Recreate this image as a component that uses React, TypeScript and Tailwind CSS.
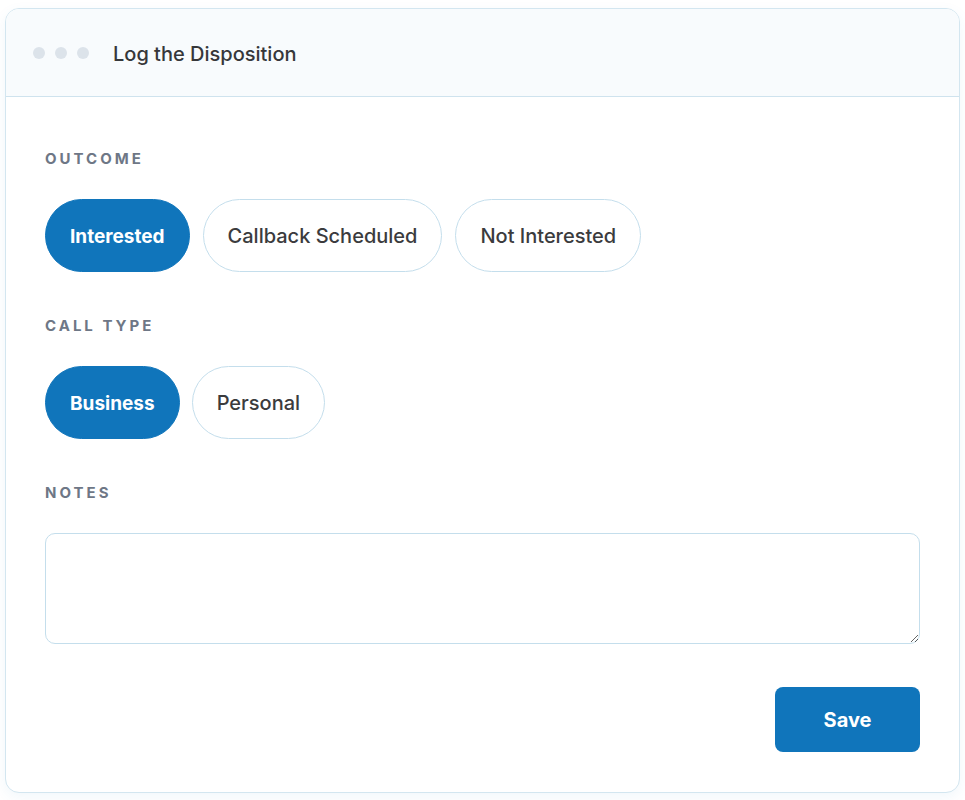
import { useState } from 'react'

const outcomes = ['Interested', 'Callback Scheduled', 'Not Interested']
const callTypes = ['Business', 'Personal']

function Pill({ label, active, onClick }: { label: string; active: boolean; onClick: () => void }) {
  return (
    <button
      type="button"
      onClick={onClick}
      className={
        active
          ? 'h-[73px] rounded-full border border-[#1075bb] bg-[#1075bb] px-[24px] pt-[3px] text-[19px] font-bold text-white'
          : 'h-[73px] rounded-full border border-[#c4deec] bg-white px-[24px] text-[20px] font-medium text-[#3b3b3d]'
      }
    >
      {label}
    </button>
  )
}

function Label({ children }: { children: string }) {
  return (
    <p className="text-[15px] leading-5 font-bold tracking-[0.2em] text-[#6e7786]">{children}</p>
  )
}

export default function App() {
  const [outcome, setOutcome] = useState('Interested')
  const [callType, setCallType] = useState('Business')
  const [notes, setNotes] = useState('')

  return (
    <div className="min-h-screen bg-white pt-[8px] pl-[5px] font-['Inter',sans-serif]">
      <div className="flex h-[785px] w-[955px] flex-col overflow-hidden rounded-[14px] border border-[#d3e6f0] bg-white shadow-[0_4px_14px_rgba(16,117,187,0.06)]">
        {/* Header */}
        <div className="flex h-[88px] shrink-0 items-center border-b border-[#cfe3ee] bg-[#f8fbfd] pl-[27px]">
          <div className="flex gap-[10px]">
            <span className="h-[12px] w-[12px] rounded-full bg-[#dce3ea]" />
            <span className="h-[12px] w-[12px] rounded-full bg-[#dce3ea]" />
            <span className="h-[12px] w-[12px] rounded-full bg-[#dce3ea]" />
          </div>
          <h1 className="ml-[24px] pt-[2px] text-[20px] font-medium text-[#36373a]">Log the Disposition</h1>
        </div>

        {/* Body */}
        <div className="flex flex-1 flex-col px-[39px] pt-[52px]">
          <Label>OUTCOME</Label>
          <div className="mt-[30px] flex gap-[13px]">
            {outcomes.map(o => (
              <Pill key={o} label={o} active={outcome === o} onClick={() => setOutcome(o)} />
            ))}
          </div>

          <div className="mt-[44px]">
            <Label>CALL TYPE</Label>
          </div>
          <div className="mt-[30px] flex gap-[12px]">
            {callTypes.map(c => (
              <Pill key={c} label={c} active={callType === c} onClick={() => setCallType(c)} />
            ))}
          </div>

          <div className="mt-[44px]">
            <Label>NOTES</Label>
          </div>
          <textarea
            value={notes}
            onChange={e => setNotes(e.target.value)}
            className="mt-[30px] h-[111px] w-full rounded-[10px] border border-[#c4deec] bg-white px-4 py-3 text-[16px] text-[#36373a] focus:outline-none"
          />

          <div className="mt-[43px] flex justify-end">
            <button
              type="button"
              className="h-[65px] w-[145px] rounded-[8px] bg-[#1075bb] text-[20px] font-bold text-white"
            >
              Save
            </button>
          </div>
        </div>
      </div>
    </div>
  )
}
